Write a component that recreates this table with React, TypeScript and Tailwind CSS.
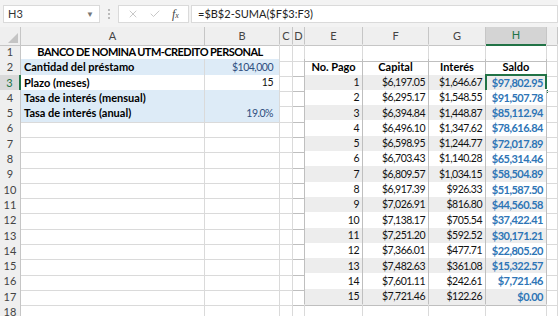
import { X, Check } from 'lucide-react';

// amortization table, one row per payment: n, capital, interés, saldo
const pagos: [number, string, string, string][] = [
  [1, '$6,197.05', '$1,646.67', '$97,802.95'],
  [2, '$6,295.17', '$1,548.55', '$91,507.78'],
  [3, '$6,394.84', '$1,448.87', '$85,112.94'],
  [4, '$6,496.10', '$1,347.62', '$78,616.84'],
  [5, '$6,598.95', '$1,244.77', '$72,017.89'],
  [6, '$6,703.43', '$1,140.28', '$65,314.46'],
  [7, '$6,809.57', '$1,034.15', '$58,504.89'],
  [8, '$6,917.39', '$926.33', '$51,587.50'],
  [9, '$7,026.91', '$816.80', '$44,560.58'],
  [10, '$7,138.17', '$705.54', '$37,422.41'],
  [11, '$7,251.20', '$592.52', '$30,171.21'],
  [12, '$7,366.01', '$477.71', '$22,805.20'],
  [13, '$7,482.63', '$361.08', '$15,322.57'],
  [14, '$7,601.11', '$242.61', '$7,721.46'],
  [15, '$7,721.46', '$122.26', '$0.00'],
];

const datos: Record<number, [string, string, boolean]> = {
  2: ['Cantidad del préstamo', '$104,000', true],
  3: ['Plazo (meses)', '15', false],
  4: ['Tasa de interés (mensual)', '', true],
  5: ['Tasa de interés (anual)', '19.0%', true],
};

const GRID = 'grid grid-cols-[21px_184px_75px_13px_12px_58px_66px_57px_61px_11px]';
const NUM = 'text-[10.5px] tracking-[-0.5px] text-[#111]';

function Cell({
  children,
  className = '',
  line = 'border-[#dadada]',
}: {
  children?: React.ReactNode;
  className?: string;
  line?: string;
}) {
  return (
    <div className={`relative flex items-center overflow-hidden whitespace-nowrap border-r border-b pl-[3px] ${line} ${className}`}>
      {children}
    </div>
  );
}

function RowHeader({ n }: { n: number }) {
  const sel = n === 3;
  return (
    <div
      className={`flex items-center justify-center border-b border-r ${
        sel ? 'bg-[#d9d9d9] text-[#217346] border-r-[#217346] border-r-2 border-b-[#c6c6c6]' : 'bg-[#efefef] text-[#444] border-[#c6c6c6]'
      }`}
    >
      {n}
    </div>
  );
}

function SheetRow({ n }: { n: number }) {
  const dato = datos[n];
  const pago = n >= 3 && n <= 17 ? pagos[n - 3] : null;
  const enTabla = n >= 2 && n <= 17;
  const tbl = 'border-[#bfbfbf]';
  const stripe = pago && pago[0] % 2 === 1 ? 'bg-[#ededed]' : 'bg-white';

  return (
    <div className={`${GRID} h-[15.3px]`}>
      <RowHeader n={n} />

      {n === 1 ? (
        <Cell className="col-span-2 justify-center pr-[3px] font-bold tracking-[-0.55px] text-black">
          BANCO DE NOMINA UTM-CREDITO PERSONAL
        </Cell>
      ) : dato ? (
        <>
          <Cell className={`pr-[3px] font-bold text-black ${dato[2] ? 'bg-[#ddebf7]' : 'bg-white'}`}>{dato[0]}</Cell>
          <Cell className={`justify-end pr-[6px] ${NUM} ${dato[2] ? 'bg-[#ddebf7] !text-[#2f4f80]' : 'bg-white'}`}>
            {dato[1]}
          </Cell>
        </>
      ) : (
        <>
          <Cell />
          <Cell />
        </>
      )}

      <Cell />
      <Cell line={enTabla ? tbl : 'border-[#dadada]'} />

      {n === 2 ? (
        <>
          <Cell line={tbl} className="justify-center pr-[3px] font-bold">No. Pago</Cell>
          <Cell line={tbl} className="justify-center pr-[3px] font-bold">Capital</Cell>
          <Cell line={tbl} className="justify-center pr-[3px] font-bold">Interés</Cell>
          <Cell line={tbl} className="justify-center pr-[3px] font-bold">Saldo</Cell>
        </>
      ) : pago ? (
        <>
          <Cell line={tbl} className={`justify-end pr-[3px] ${NUM} ${stripe}`}>{pago[0]}</Cell>
          <Cell line={tbl} className={`justify-end pr-[3px] ${NUM} ${stripe}`}>{pago[1]}</Cell>
          <Cell line={tbl} className={`justify-end pr-[3px] ${NUM} ${stripe}`}>{pago[2]}</Cell>
          <Cell line={tbl} className={`justify-end overflow-visible pr-[3px] font-bold tracking-[-0.5px] text-[#2e75b6] ${stripe}`}>
            {pago[3]}
            {n === 3 && (
              <>
                <span className="pointer-events-none absolute -left-px -top-px -right-px -bottom-px border-2 border-[#217346]" />
                <span className="absolute -bottom-[3px] -right-[3px] h-[5px] w-[5px] border border-white bg-[#217346]" />
              </>
            )}
          </Cell>
        </>
      ) : (
        <>
          <Cell line={n === 1 ? 'border-r-[#dadada] border-b-[#bfbfbf]' : 'border-[#dadada]'} />
          <Cell line={n === 1 ? 'border-r-[#dadada] border-b-[#bfbfbf]' : 'border-[#dadada]'} />
          <Cell line={n === 1 ? 'border-r-[#dadada] border-b-[#bfbfbf]' : 'border-[#dadada]'} />
          <Cell line={n === 1 ? 'border-r-[#dadada] border-b-[#bfbfbf]' : 'border-[#dadada]'} />
        </>
      )}

      <Cell />
    </div>
  );
}

export default function App() {
  const letras = ['A', 'B', 'C', 'D', 'E', 'F', 'G', 'H', ''];
  const filas = Array.from({ length: 18 }, (_, i) => i + 1);

  return (
    <div className="h-[316px] w-[558px] overflow-hidden bg-white font-['Lato',sans-serif] text-[11px] text-black">
      {/* name box + formula bar */}
      <div className="flex h-[27px] items-center bg-[#f3f3f3] pt-[1px]">
        <div className="ml-[3px] flex h-[18px] w-[97px] items-center justify-between border border-[#dadada] bg-white pl-[4px] pr-[5px] text-[#333]">
          <span>H3</span>
          <span className="text-[8px] text-[#777]">▼</span>
        </div>
        <div className="flex w-[18px] flex-col items-center gap-[2px]">
          <span className="h-[2px] w-[2px] bg-[#bbb]" />
          <span className="h-[2px] w-[2px] bg-[#bbb]" />
          <span className="h-[2px] w-[2px] bg-[#bbb]" />
        </div>
        <div className="flex h-[18px] w-[71px] items-center border border-[#dadada] bg-white">
          <X className="ml-[8px] h-[12px] w-[12px] text-[#b5b5b5]" strokeWidth={1.5} />
          <Check className="ml-[10px] h-[12px] w-[12px] text-[#b5b5b5]" strokeWidth={1.5} />
          <span className="ml-[11px] font-['Liberation_Serif',serif] text-[12px] italic text-[#444]">
            f<span className="text-[8px]">x</span>
          </span>
        </div>
        <div className="ml-[2px] flex h-[18px] flex-1 items-center border border-[#dadada] bg-white pl-[6px] text-[#222]">
          =$B$2-SUMA($F$3:F3)
        </div>
      </div>

      {/* column headers */}
      <div className={`${GRID} h-[17px]`}>
        <div className="relative border-b border-r border-[#c6c6c6] bg-[#efefef]">
          <svg className="absolute bottom-[2px] right-[2px]" width="10" height="10" viewBox="0 0 10 10">
            <polygon points="10,0 10,10 0,10" fill="#c4c4c4" />
          </svg>
        </div>
        {letras.map((l, i) => (
          <div
            key={i}
            className={`flex items-center justify-center border-r ${
              l === 'H'
                ? 'border-b-2 border-b-[#217346] border-r-[#c6c6c6] bg-[#d4d4d4] text-[#217346]'
                : 'border-b border-[#c6c6c6] bg-[#efefef] text-[#444]'
            }`}
          >
            {l}
          </div>
        ))}
      </div>

      {filas.map((n) => (
        <SheetRow key={n} n={n} />
      ))}
    </div>
  );
}
